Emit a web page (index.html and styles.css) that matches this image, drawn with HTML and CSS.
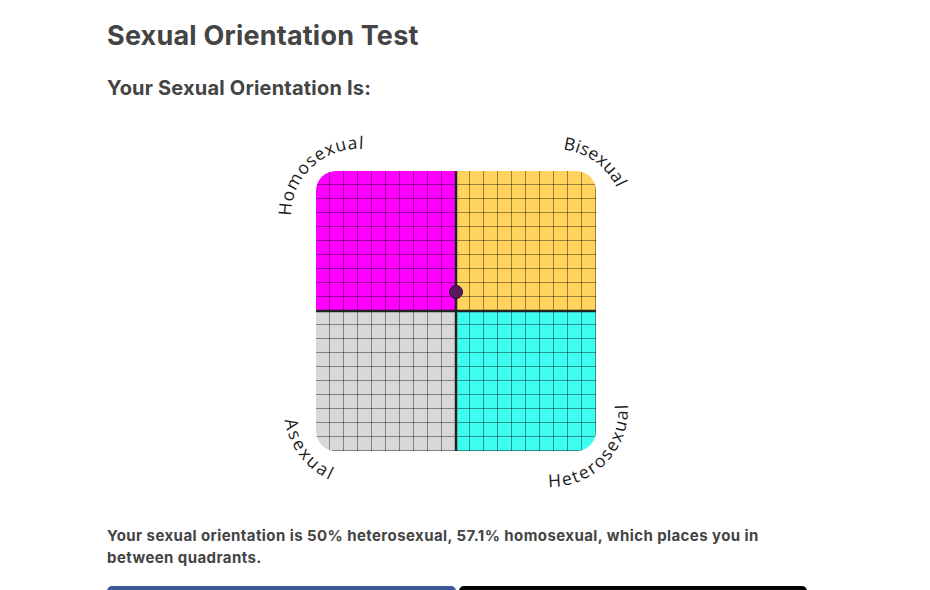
FILE: index.html
```html
<!DOCTYPE html>
<html lang="en">
<head>
<meta charset="utf-8">
<title>Sexual Orientation Test</title>
<link rel="stylesheet" href="styles.css">
</head>
<body>
<main class="page">
  <h1 class="title">Sexual Orientation Test</h1>
  <h2 class="subtitle">Your Sexual Orientation Is:</h2>
  <svg class="chart" width="400" height="380" viewBox="257 120 400 380" xmlns="http://www.w3.org/2000/svg">
    <defs>
      <clipPath id="round">
        <rect x="316" y="171" width="280" height="280" rx="20" ry="20"/>
      </clipPath>
      <pattern id="grid" x="316" y="171" width="14" height="14" patternUnits="userSpaceOnUse">
        <path d="M13.5 0V14M0 13.5H14" fill="none" stroke="rgba(0,0,0,0.4)" stroke-width="1"/>
      </pattern>
      <path id="p-homo" d="M291 216 A67 67 0 0 1 369.6 150"/>
      <path id="p-bi" d="M563 149.5 A67 67 0 0 1 620 197"/>
      <path id="p-a" d="M284.8 419.9 A78 78 0 0 0 332.8 481.3"/>
      <path id="p-hetero" d="M548.6 487 A78 78 0 0 0 627.5 400"/>
    </defs>
    <g clip-path="url(#round)">
      <rect class="q-homo" x="316" y="171" width="140" height="140"/>
      <rect class="q-bi" x="456" y="171" width="140" height="140"/>
      <rect class="q-a" x="316" y="311" width="140" height="140"/>
      <rect class="q-hetero" x="456" y="311" width="140" height="140"/>
      <rect x="316" y="171" width="280" height="280" fill="url(#grid)"/>
      <path class="axis" d="M456 171V451M316 311H596"/>
    </g>
    <circle class="dot" cx="456" cy="292" r="6.5"/>
    <text class="label"><textPath href="#p-homo" textLength="110" lengthAdjust="spacing">Homosexual</textPath></text>
    <text class="label"><textPath href="#p-bi" textLength="69" lengthAdjust="spacing">Bisexual</textPath></text>
    <text class="label"><textPath href="#p-a" textLength="78" lengthAdjust="spacing">Asexual</textPath></text>
    <text class="label"><textPath href="#p-hetero" textLength="128" lengthAdjust="spacing">Heterosexual</textPath></text>
  </svg>
  <p class="result">Your sexual orientation is 50% heterosexual, 57.1% homosexual, which places you in between quadrants.</p>
  <div class="share">
    <a class="btn btn-fb" href="#" aria-label="Share on Facebook"></a>
    <a class="btn btn-x" href="#" aria-label="Share on X"></a>
  </div>
</main>
</body>
</html>
```

FILE: styles.css
```css
html, body {
  margin: 0;
  padding: 0;
  background: #ffffff;
}

body {
  font-family: Inter, "Noto Sans", "Liberation Sans", sans-serif;
  color: #444444;
}

.page {
  width: 700px;
  margin-left: 107px;
}

.title {
  font-size: 27px;
  font-weight: 700;
  line-height: 36px;
  margin: 18px 0 0;
  letter-spacing: 0.2px;
  color: #444444;
}

.subtitle {
  font-size: 20px;
  font-weight: 700;
  line-height: 28px;
  margin: 20px 0 0;
  letter-spacing: 0.2px;
  color: #444444;
}

.chart {
  display: block;
  margin: 18px 0 0 150px;
}

.q-homo { fill: #ff00ff; }
.q-bi { fill: #ffd35e; }
.q-a { fill: #d8d8d8; }
.q-hetero { fill: #3cfdf0; }

.axis {
  fill: none;
  stroke: #222222;
  stroke-width: 2.5;
}

.dot {
  fill: #5b1a5d;
  stroke: #2a0b2a;
  stroke-width: 1;
}

.label {
  font-family: "Open Sans", "DejaVu Sans", sans-serif;
  font-size: 17.5px;
  font-weight: 400;
  fill: #1c1c1c;
}

.result {
  font-size: 15px;
  font-weight: 700;
  line-height: 22px;
  margin: 25px 0 0;
  letter-spacing: 0.42px;
  color: #444444;
}

.share {
  display: flex;
  gap: 3px;
  margin-top: 17px;
}

.btn {
  flex: 1;
  display: block;
  height: 50px;
  border-radius: 5px;
  text-decoration: none;
}

.btn-fb { background: #3b5998; }
.btn-x { background: #000000; }
```
